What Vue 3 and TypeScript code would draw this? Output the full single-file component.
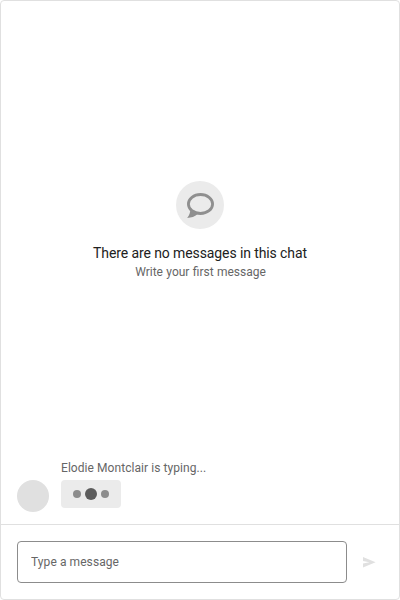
<script setup lang="ts">
import { ref } from 'vue'

const draft = ref('')
const typingUser = 'Elodie Montclair'
</script>

<template>
  <section class="chat">
    <main class="body">
      <div class="empty">
        <div class="empty-icon">
          <svg width="48" height="48" viewBox="0 0 48 48">
            <ellipse cx="24.5" cy="23" rx="12.1" ry="9.5" fill="none" stroke="#8f8f8f" stroke-width="2.8" />
            <path d="M14.2 28.2C14.4 31 13.6 34 11.2 36.9C15.4 36.7 18.8 35.5 21.4 33.2L18.2 29.8Z" fill="#8f8f8f" />
          </svg>
        </div>
        <h1 class="title">There are no messages in this chat</h1>
        <p class="subtitle">Write your first message</p>
      </div>
    </main>
    <div class="typing">
      <span class="avatar"></span>
      <div class="typing-content">
        <span class="typing-label">{{ typingUser }} is typing...</span>
        <div class="bubble">
          <i class="dot"></i>
          <i class="dot active"></i>
          <i class="dot"></i>
        </div>
      </div>
    </div>
    <footer class="composer">
      <input v-model="draft" class="input" type="text" placeholder="Type a message" />
      <button class="send" type="button" disabled aria-label="Send">
        <svg width="16" height="16" viewBox="0 0 16 16">
          <path d="M2 3L14.6 8.3L2 13.6V9.6L8.4 8.3L2 7Z" fill="#e0e0e0" />
        </svg>
      </button>
    </footer>
  </section>
</template>

<style>
body {
  background: #fff;
}
</style>

<style scoped>
.chat {
  box-sizing: border-box;
  width: 400px;
  height: 600px;
  display: flex;
  flex-direction: column;
  border: 1px solid #e0e0e0;
  border-radius: 4px;
  background: #fff;
  font-family: Roboto, sans-serif;
  color: #212121;
}
.body {
  flex: 1;
  min-height: 0;
}
.empty {
  display: flex;
  flex-direction: column;
  align-items: center;
  padding-top: 180px;
}
.empty-icon {
  width: 48px;
  height: 48px;
  border-radius: 50%;
  background: #ebebeb;
}
.empty-icon svg,
.send svg {
  display: block;
}
.title {
  margin: 14px 0 0;
  font-size: 14px;
  line-height: 20px;
  font-weight: 400;
  letter-spacing: -0.1px;
}
.subtitle {
  margin: 0;
  padding-left: 1px;
  font-size: 12px;
  line-height: 18px;
  word-spacing: 0.35px;
  color: #666;
}
.typing {
  display: flex;
  align-items: flex-end;
  gap: 12px;
  padding: 0 16px 12px;
}
.avatar {
  width: 32px;
  height: 32px;
  border-radius: 50%;
  background: #e0e0e0;
}
.typing-content {
  padding-bottom: 4px;
}
.typing-label {
  display: block;
  margin-bottom: 3px;
  font-size: 12px;
  line-height: 18px;
  letter-spacing: 0.06px;
  color: #666;
}
.bubble {
  box-sizing: border-box;
  display: flex;
  align-items: center;
  justify-content: center;
  gap: 4px;
  width: 60px;
  height: 28px;
  border-radius: 4px;
  background: #ebebeb;
}
.dot {
  width: 8px;
  height: 8px;
  border-radius: 50%;
  background: #8c8c8c;
}
.dot.active {
  width: 12px;
  height: 12px;
  background: #5c5c5c;
}
.composer {
  box-sizing: border-box;
  display: flex;
  align-items: center;
  gap: 6px;
  height: 75px;
  padding: 0 14px 0 16px;
  border-top: 1px solid #e0e0e0;
}
.input {
  box-sizing: border-box;
  flex: 1;
  min-width: 0;
  height: 42px;
  padding: 0 13px;
  border: 1px solid #8c8c8c;
  border-radius: 4px;
  outline: none;
  background: #fff;
  font-family: inherit;
  font-size: 12px;
  letter-spacing: 0.08px;
  color: #212121;
}
.input::placeholder {
  color: #666;
  opacity: 1;
}
.send {
  display: grid;
  place-items: center;
  width: 32px;
  height: 32px;
  padding: 0;
  border: 0;
  background: transparent;
}
</style>
